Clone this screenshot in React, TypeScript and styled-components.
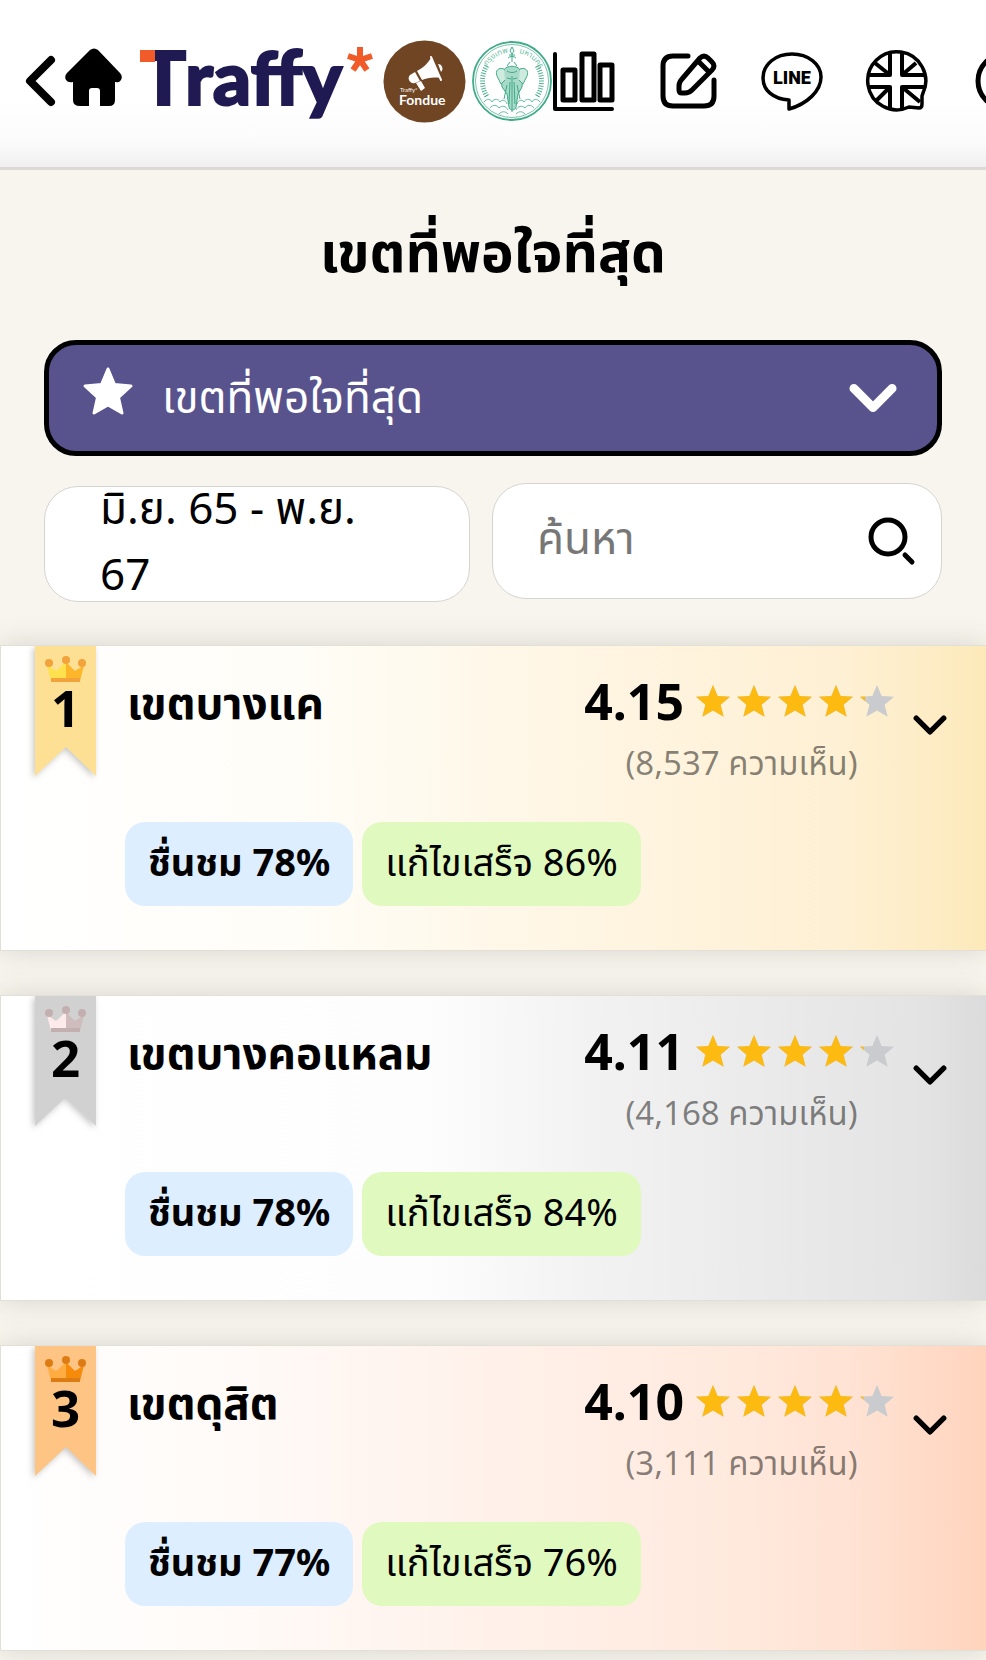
import React from 'react';
import styled, { createGlobalStyle } from 'styled-components';

const GlobalStyle = createGlobalStyle`
  *, *::before, *::after { box-sizing: border-box; }
  body {
    margin: 0;
    background: #f8f5ee;
    color: #000;
    font-family: 'Noto Sans', 'Noto Sans Thai', 'Open Sans', sans-serif;
    overflow-x: hidden;
  }
  button, input, select { font: inherit; color: inherit; }
`;

const Header = styled.header`
  display: flex;
  align-items: center;
  height: 170px;
  padding: 0 0 5px 24px;
  overflow: hidden;
  border-bottom: 3px solid #dcd8d5;
  background: linear-gradient(#fff 60%, #fbfbfb 85%, #f0f0f0);
`;

const IconButton = styled.button`
  display: flex;
  flex: none;
  padding: 0;
  border: 0;
  background: none;
  cursor: pointer;
`;

const Brand = styled.a`
  display: flex;
  flex: none;
  align-items: center;
  gap: 5px;
  margin-left: 12px;
`;

const Nav = styled.nav`
  display: flex;
  flex: none;
  gap: 40px;
`;

const NavLink = styled.a`
  display: flex;
  flex: none;
  color: #000;
`;

const Title = styled.h1`
  margin: 0;
  padding: 40px 0 48px;
  text-align: center;
  font-size: 55px;
  font-weight: 700;
  line-height: 82px;
`;

const Filters = styled.form`
  display: grid;
  grid-template-columns: minmax(0, 426fr) minmax(0, 450fr);
  gap: 27px 22px;
  margin: 0 44px 43px;
`;

const CategoryField = styled.label`
  position: relative;
  grid-column: 1 / -1;
  color: #fff;
  > svg { position: absolute; pointer-events: none; }
  > svg:first-child { left: 38px; top: 26px; }
  > svg:last-child { right: 44px; top: 44px; }
`;

const CategorySelect = styled.select`
  display: block;
  width: 100%;
  height: 116px;
  padding: 0 100px 4px 113px;
  border: 5px solid #000;
  border-radius: 32px;
  appearance: none;
  background: #58538d;
  font-size: 44px;
`;

const DateButton = styled.button`
  height: 116px;
  margin-top: 3px;
  padding: 0 55px;
  display: flex;
  align-items: center;
  border: 1px solid #d6d4d0;
  border-radius: 34px;
  background: #fff;
  text-align: left;
  font-size: 44px;
  line-height: 66px;
`;

const DateText = styled.span`
  padding-bottom: 8px;
`;

const SearchField = styled.div`
  display: flex;
  align-items: center;
  height: 116px;
  padding: 0 24px 0 44px;
  border: 1px solid #d6d4d0;
  border-radius: 34px;
  background: #fff;
`;

const SearchInput = styled.input`
  flex: 1;
  min-width: 0;
  height: 100%;
  padding: 0 0 8px;
  border: 0;
  outline: 0;
  background: none;
  font-size: 44px;
  &::placeholder { color: #777; opacity: 1; }
`;

const List = styled.ol`
  display: grid;
  gap: 44px;
  margin: 0;
  padding: 0 0 9px;
  list-style: none;
`;

const Card = styled.li<{ $fill: string }>`
  display: grid;
  grid-template-columns: 61px 1fr;
  column-gap: 29px;
  min-height: 306px;
  padding: 0 38px 0 34px;
  border: 1px solid #e2dfd7;
  border-right: 0;
  background: linear-gradient(90deg, ${(p) => p.$fill});
  box-shadow: 0 0 28px rgba(60, 70, 50, 0.18);
`;

const Ribbon = styled.div`
  position: relative;
  height: 131px;
  > svg { position: absolute; left: -10px; top: 0; }
`;

const Rank = styled.strong`
  position: relative;
  display: block;
  padding-top: 26px;
  text-align: center;
  font-size: 51px;
  line-height: 70px;
`;

const Body = styled.div`
  display: flex;
  flex-direction: column;
`;

const Summary = styled.div`
  display: flex;
  align-items: flex-start;
  height: 176px;
  padding-top: 21px;
`;

const Name = styled.h2`
  flex: 1;
  margin: 0;
  padding-left: 2px;
  font-size: 44px;
  line-height: 70px;
`;

const Rating = styled.div`
  display: flex;
  flex-direction: column;
  align-items: center;
`;

const Score = styled.div`
  display: flex;
  align-items: center;
  gap: 12px;
  font-size: 50px;
  font-weight: 700;
  line-height: 68px;
`;

const Stars = styled.span`
  display: flex;
  gap: 7px;
`;

const Reviews = styled.span`
  padding-left: 5px;
  color: rgba(0, 0, 0, 0.48);
  font-size: 33px;
  line-height: 56px;
`;

const Toggle = styled(IconButton)`
  margin: 48px 0 0 18px;
`;

const Pills = styled.div`
  display: flex;
  gap: 9px;
`;

const Pill = styled.span<{ $tone: 'blue' | 'green' }>`
  padding: 0 23px 6px;
  border-radius: 20px;
  background: ${(p) => (p.$tone === 'blue' ? '#dceeff' : '#dff9bf')};
  font-size: 38px;
  font-weight: ${(p) => (p.$tone === 'blue' ? 700 : 400)};
  line-height: 78px;
`;

const starPath = 'M17 0l4.600 11 12.400.800-9.400 8 3.100 12L17 25.400 6.300 31.800l3.100-12L0 11.800 12.400 11z';

const Star = ({ fill }: { fill: number }) => (
  <svg width="34" height="33" viewBox="0 0 34 33">
    <path d={starPath} fill="#c9cbce" />
    <path d={starPath} fill="#fdbb12" style={{ clipPath: `inset(0 ${(1 - fill) * 100}% 0 0)` }} />
  </svg>
);

const Chevron = ({ width, stroke }: { width: number; stroke: number }) => (
  <svg width={width} height={(width * 20) / 34} viewBox="0 0 34 20" fill="none" stroke="currentColor" strokeWidth={stroke} strokeLinecap="round" strokeLinejoin="round">
    <path d="M4 3l13 13L30 3" />
  </svg>
);

const TraffyLogo = () => (
  <svg width="242" height="100" viewBox="0 0 242 100" role="img" aria-label="Traffy">
    <g fill="#201a52" stroke="#201a52" strokeWidth="2" fontFamily="Lato" fontWeight="900" fontSize="75">
      <text x="5" y="74">T</text>
      <text x="49" y="74">raffy</text>
    </g>
    <path d="M4 19h15v12H4z" fill="#f15a29" />
    <path d="M224 16v13M224 29l-12-4M224 29l12-4M224 29l-7 10M224 29l7 10" stroke="#f15a29" strokeWidth="6" fill="none" />
  </svg>
);

const FondueLogo = () => (
  <svg width="83" height="83" viewBox="0 0 83 83" role="img" aria-label="Traffy Fondue">
    <circle cx="41.500" cy="41.500" r="41" fill="#704523" />
    <g fill="#fff">
      <path d="M34 31c6-3 10-7 14-13l9 20c-7-1-13 0-18 2z" />
      <path d="M27 35l5-3 5 9-5 2c-3 1-5-1-6-3s0-4 1-5zM33 43l5-2 4 7-4 3z" />
      <path d="M55 24c4 0 6 5 3 8z" />
      <path d="M48 17l10 23" stroke="#fff" strokeWidth="2" strokeLinecap="round" />
      <text x="17" y="52" fontSize="6" fontFamily="Lato">Traffy*</text>
      <text x="16" y="65" fontSize="14" fontWeight="700" fontFamily="Lato">Fondue</text>
    </g>
  </svg>
);

const ticks = [...Array(13)].flatMap((_, i) => [-30 + i * 5, 150 + i * 5]);

const CitySeal = () => (
  <svg width="82" height="82" viewBox="0 0 82 82" fill="none" stroke="#3fab87" role="img" aria-label="กรุงเทพมหานคร">
    <circle cx="41" cy="41" r="39" strokeWidth="1.800" />
    <circle cx="41" cy="41" r="36.500" strokeWidth=".7" />
    {ticks.map((a) => (
      <path key={a} d="M68 41h5" transform={`rotate(${a} 41 41)`} strokeWidth=".9" />
    ))}
    <defs>
      <path id="sealLeft" d="M16 26A29 29 0 0 1 36 13" />
      <path id="sealRight" d="M48 13A29 29 0 0 1 68 28" />
    </defs>
    <g fill="#6fc0a4" stroke="none" fontSize="8" fontFamily="Noto Sans, Noto Sans Thai">
      <text><textPath href="#sealLeft">กรุงเทพ</textPath></text>
      <text><textPath href="#sealRight">มหานคร</textPath></text>
    </g>
    <path d="M41 7l2 4-2 3-2-3zM38 15h6M37 18c2-2 6-2 8 0M41 14v8M39 22l-3 4M43 22l3 4" strokeWidth="1" />
    <path d="M33 30c2-5 14-5 16 0l3 6-1 11-4 7-2 13c-1 4-6 4-7 0l-2-13-5-7-1-11z" fill="#a9d9c8" />
    <path d="M33 29c-6-2-9 2-7 7l4 8 4-4M49 29c6-2 9 2 7 7l-4 8-4-4" fill="#cfeadf" />
    <path d="M36 31c3 2 7 2 10 0M36 38l4 1M46 38l-4 1M39 42l-1 22M43 42l1 22M41 36v36M36 45l-3 14M46 45l3 14" strokeWidth="1" />
    <path d="M13 62c3-4 7-3 8 0 2-4 7-3 8 0 2-3 6-2 7 2M46 64c1-4 5-5 7-2 1-3 6-4 8 0 1-3 5-4 8 0M19 68c3-4 7-3 9 0 3-3 7-2 9 2M45 70c2-4 6-5 9-2 2-3 6-4 9 0M28 74c3-3 6-3 9 0M45 74c3-3 6-3 9 0" strokeWidth="1" opacity=".8" />
  </svg>
);

const regions = [
  {
    rank: 1, name: 'เขตบางแค', score: '4.15', reviews: '8,537', happy: 78, fixed: 86,
    fill: '#fff, #fffdf7 30%, #fff5e2 60%, #fef0d4 85%, #fdecc4 95%, #fde9b9',
    ribbon: '#fde093', crown: ['#ffe14d', '#fdb52a', '#f2a33c'],
  },
  {
    rank: 2, name: 'เขตบางคอแหลม', score: '4.11', reviews: '4,168', happy: 78, fixed: 84,
    fill: '#fff, #fdfdfd 43%, #f2f2f2 60%, #e8e8e8 83%, #e3e3e3 94%, #dbdbdb',
    ribbon: '#d1d1d1', crown: ['#fdebeb', '#cfbcbc', '#c4afb0'],
  },
  {
    rank: 3, name: 'เขตดุสิต', score: '4.10', reviews: '3,111', happy: 77, fixed: 76,
    fill: '#fff, #fffaf7 25%, #fff1ea 50%, #ffe9dd 75%, #ffe2d3 87%, #ffd4bd',
    ribbon: '#fdc483', crown: ['#ffad42', '#f58a0b', '#de7c14'],
  },
];

const RibbonShape = ({ color, crown }: { color: string; crown: string[] }) => (
  <svg width="81" height="142" viewBox="0 0 81 142">
    <path d="M10 0h61v130L41 101 10 130z" fill={color} style={{ filter: 'drop-shadow(-2px 2px 3px rgba(0,0,0,.22))' }} />
    <path d="M22 19l9 6 10-9v19H26z" fill={crown[0]} />
    <path d="M41 16l9 9 9-6-4 16H41z" fill={crown[1]} />
    <path d="M26 32h29v4H26z" fill={crown[2]} />
    <circle cx="24" cy="17" r="4" fill={crown[2]} />
    <circle cx="41" cy="14" r="4" fill={crown[2]} />
    <circle cx="57" cy="17" r="4" fill={crown[2]} />
  </svg>
);

const App = () => (
  <>
    <GlobalStyle />
    <Header>
      <IconButton aria-label="ย้อนกลับ">
        <svg width="34" height="54" viewBox="0 0 34 54" fill="none" stroke="#000" strokeWidth="8" strokeLinecap="round" strokeLinejoin="round">
          <path d="M27 6L6 27l21 21" />
        </svg>
      </IconButton>
      <NavLink href="#home" aria-label="หน้าแรก">
        <svg width="66" height="66" viewBox="0 1 66 66">
          <path d="M32 3q4-3 8 0l22 23q3 3 1 7-2 3-5 2h-1v18q0 6-6 6h-9V44q0-3-3-3h-5q-3 0-3 3v15h-9q-7 0-7-6V35q-5 1-7-2-2-4 1-7z" />
        </svg>
      </NavLink>
      <Brand href="#traffy">
        <TraffyLogo />
        <FondueLogo />
        <CitySeal />
      </Brand>
      <Nav>
        <NavLink href="#stats" aria-label="สถิติ">
          <svg width="64" height="64" viewBox="1 0 64 64" fill="none" stroke="#000" strokeWidth="5" strokeLinecap="round" strokeLinejoin="round">
            <path d="M3 5v55h57" strokeWidth="4" />
            <path d="M11 21h12v30H11zM30 5h12v46H30zM48 16h12v35H48z" />
          </svg>
        </NavLink>
        <NavLink href="#report" aria-label="แจ้งเรื่อง">
          <svg width="64" height="64" viewBox="0 0 64 64" fill="none" stroke="#000" strokeWidth="5" strokeLinecap="round" strokeLinejoin="round">
            <path d="M31 7H16Q6 7 6 17v30q0 10 10 10h31q10 0 10-10V31" />
            <path d="M43 9q4-4 8 0l4 4q4 4 0 8L35 41q-3 3-7 3h-3q-3 0-3-3v-4q0-4 3-7zM41 12l11 11" />
          </svg>
        </NavLink>
        <NavLink href="#line" aria-label="LINE">
          <svg width="64" height="64" viewBox="1 0 64 64">
            <path d="M29 51C13 50 3 41 3 29 3 15 16 5 32 5s29 10 29 23c0 14-14 27-32 32z" fill="none" stroke="#000" strokeWidth="3.500" strokeLinejoin="round" />
            <text x="32" y="35" textAnchor="middle" fontFamily="Roboto" fontWeight="900" fontSize="18">LINE</text>
          </svg>
        </NavLink>
        <NavLink href="#language" aria-label="English">
          <svg width="64" height="64" viewBox="1 0 64 64" fill="none" stroke="#000" strokeWidth="3.500" strokeLinejoin="round">
            <path d="M59 44A29 29 0 1 0 45 58l10 1q3 0 3-4v-8z" />
            <path d="M26 4v22H4M38 4v22h22M26 60V38H4M38 60V38h22" strokeWidth="4" />
            <path d="M11 14l15 12M52 14L38 26M12 52l14-14M56 53L38 38" strokeWidth="4" />
          </svg>
        </NavLink>
        <NavLink href="#search" aria-label="ค้นหา">
          <svg width="64" height="64" viewBox="-4 0 64 64" fill="none" stroke="#000" strokeWidth="5">
            <circle cx="32" cy="32" r="27" />
          </svg>
        </NavLink>
      </Nav>
    </Header>

    <main>
      <Title>เขตที่พอใจที่สุด</Title>
      <Filters onSubmit={(e) => e.preventDefault()}>
        <CategoryField>
          <svg width="52" height="50" viewBox="0 0 52 50" fill="#fff" stroke="#fff" strokeWidth="3" strokeLinejoin="round">
            <path d="M26 3l6.500 15.500L49 20 36.500 31.500 40 47 26 39 12 47l3.500-15.500L3 20l16.500-1.500z" />
          </svg>
          <CategorySelect aria-label="หมวดหมู่">
            <option>เขตที่พอใจที่สุด</option>
          </CategorySelect>
          <Chevron width={50} stroke={6} />
        </CategoryField>
        <DateButton type="button">
          <DateText>มิ.ย. 65 - พ.ย. 67</DateText>
        </DateButton>
        <SearchField>
          <SearchInput type="text" placeholder="ค้นหา" aria-label="ค้นหา" />
          <IconButton type="submit" aria-label="ค้นหา">
            <svg width="50" height="52" viewBox="0 0 50 52" fill="none" stroke="#000" strokeWidth="5" strokeLinecap="round">
              <circle cx="21" cy="22" r="17" />
              <path d="M38 40l7 7" />
            </svg>
          </IconButton>
        </SearchField>
      </Filters>

      <List>
        {regions.map((r) => (
          <Card key={r.rank} $fill={r.fill}>
            <Ribbon>
              <RibbonShape color={r.ribbon} crown={r.crown} />
              <Rank>{r.rank}</Rank>
            </Ribbon>
            <Body>
              <Summary>
                <Name>{r.name}</Name>
                <Rating>
                  <Score>
                    {r.score}
                    <Stars>
                      {[0, 1, 2, 3, 4].map((i) => (
                        <Star key={i} fill={Math.max(0, Math.min(1, Number(r.score) - i))} />
                      ))}
                    </Stars>
                  </Score>
                  <Reviews>({r.reviews} ความเห็น)</Reviews>
                </Rating>
                <Toggle aria-label="แสดงรายละเอียด">
                  <Chevron width={36} stroke={5} />
                </Toggle>
              </Summary>
              <Pills>
                <Pill $tone="blue">ชื่นชม {r.happy}%</Pill>
                <Pill $tone="green">แก้ไขเสร็จ {r.fixed}%</Pill>
              </Pills>
            </Body>
          </Card>
        ))}
      </List>
    </main>
  </>
);

export default App;
